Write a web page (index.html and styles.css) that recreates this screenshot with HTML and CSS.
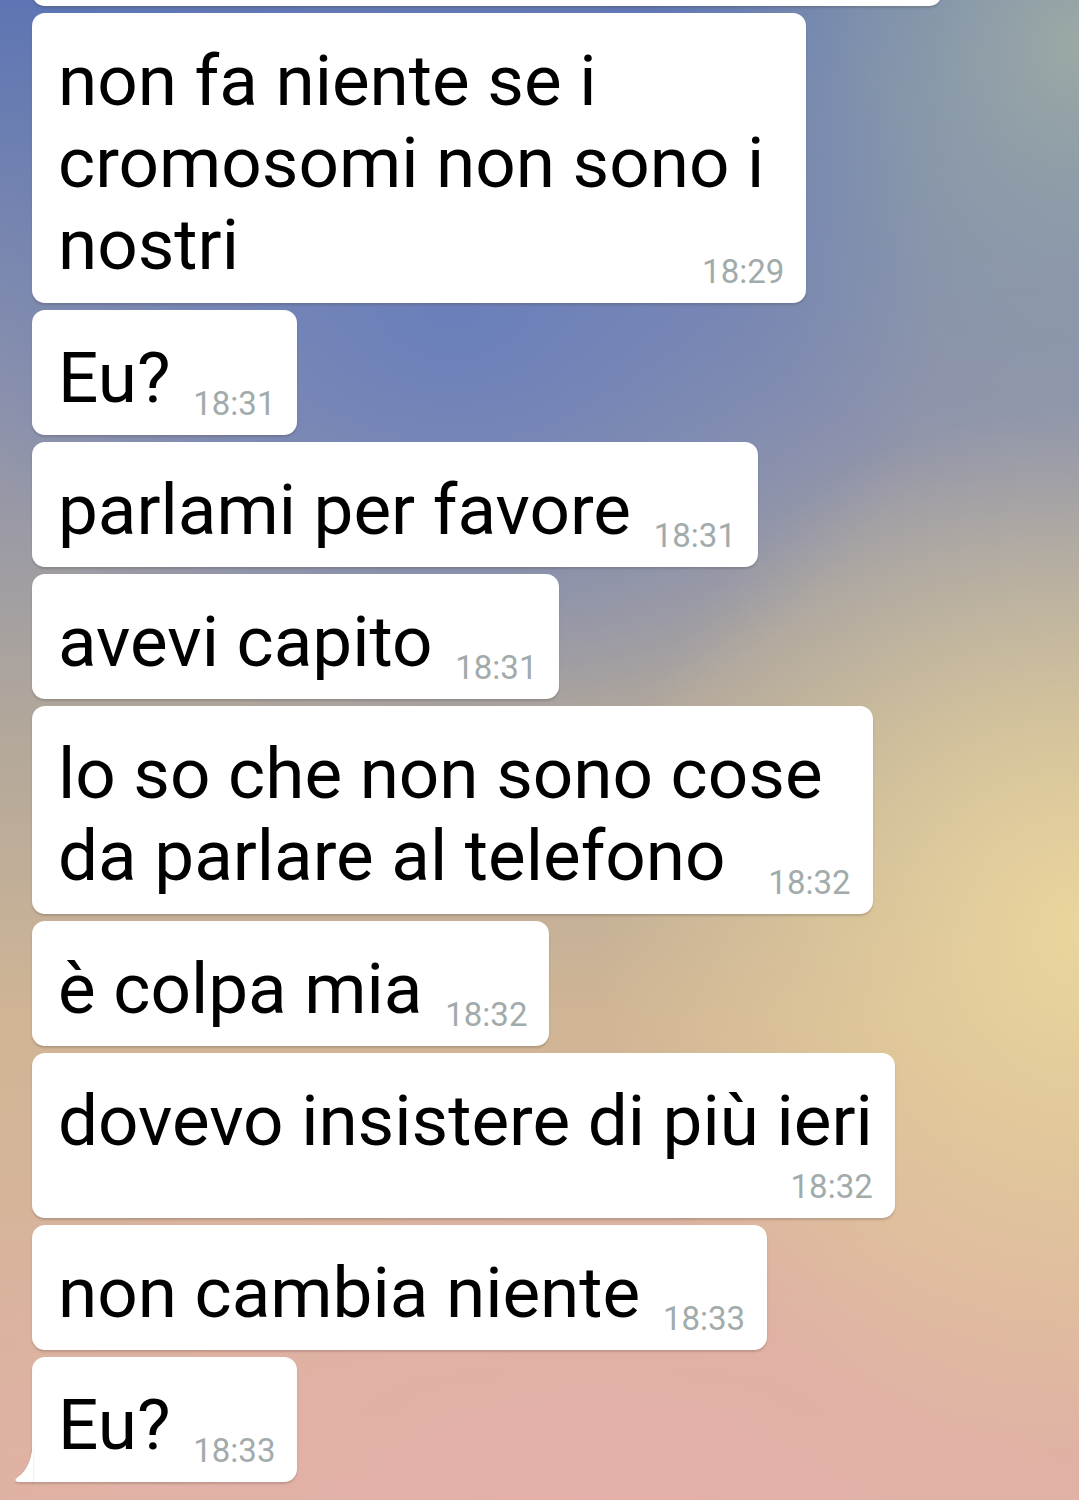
FILE: index.html
```html
<!DOCTYPE html>
<html lang="it">

<head>
  <meta charset="UTF-8">
  <title>Chat</title>
  <link rel="stylesheet" href="styles.css">
</head>

<body>
  <div class="chat">

    <!-- previous message, only its bottom edge is on screen -->
    <div class="msg msg-cut"></div>

    <div class="msg msg-multi"><span class="text">non fa niente se i<br>cromosomi non sono i<br>nostri</span><span class="spacer"></span><span class="time">18:29</span></div>

    <div class="msg"><span class="text">Eu?</span><span class="spacer"></span><span class="time">18:31</span></div>

    <div class="msg"><span class="text">parlami per favore</span><span class="spacer"></span><span class="time">18:31</span></div>

    <div class="msg"><span class="text">avevi capito</span><span class="spacer"></span><span class="time">18:31</span></div>

    <div class="msg msg-multi"><span class="text">lo so che non sono cose<br>da parlare al telefono</span><span class="spacer"></span><span class="time">18:32</span></div>

    <div class="msg"><span class="text">è colpa mia</span><span class="spacer"></span><span class="time">18:32</span></div>

    <div class="msg"><span class="text">dovevo insistere di più ieri</span><br><span class="spacer"></span><span class="time">18:32</span></div>

    <div class="msg"><span class="text">non cambia niente</span><span class="spacer"></span><span class="time">18:33</span></div>

    <div class="msg msg-last"><span class="text">Eu?</span><span class="spacer"></span><span class="time">18:33</span>
      <svg class="tail" width="18" height="44" viewBox="0 0 18 44">
        <path d="M18 0 C18 20 12 33 3 39 Q-1 42 1 43 Q2 44 4 44 L18 44 Z" fill="#fff" />
      </svg>
    </div>

  </div>
</body>

</html>
```

FILE: styles.css
```css
* {
  box-sizing: border-box;
}

body {
  margin: 0;
  font-family: Roboto, "Noto Sans", Arial, sans-serif;
}

.chat {
  height: 1500px;
  overflow: hidden;
  display: flex;
  flex-direction: column;
  justify-content: flex-end;
  align-items: flex-start;
  gap: 7px;
  padding: 0 0 18px 32px;
  background:
    radial-gradient(ellipse 45% 30% at 42% 20%, #6a7fbb 0%, rgba(106, 127, 187, 0) 100%),
    radial-gradient(ellipse 40% 30% at 100% 3%, #9ca9a5 0%, rgba(156, 169, 165, 0) 100%),
    radial-gradient(ellipse 45% 35% at 100% 62%, #ead59d 0%, rgba(234, 213, 157, 0) 100%),
    radial-gradient(ellipse 70% 30% at 55% 100%, #e4b0a9 0%, rgba(228, 176, 169, 0) 100%),
    linear-gradient(180deg, #5d75b4 0%, #8e93ab 28%, #b1a79b 48%, #d0b595 68%, #dfb2a2 100%);
}

.msg {
  position: relative;
  flex-shrink: 0;
  background: #fff;
  border-radius: 13px;
  padding: 27px 22px 16px 26px;
  font-size: 33px;
  line-height: 1;
  box-shadow: 0 2px 2px rgba(70, 60, 50, 0.22);
}

.msg-cut {
  width: 910px;
  height: 160px;
}

.msg-multi {
  padding-right: 42px;
  padding-bottom: 17px;
}

.text {
  font-size: 71px;
  line-height: 82px;
  color: #000;
}

.spacer {
  display: inline-block;
  width: 105px;
  height: 35px;
}

.time {
  position: absolute;
  right: 22px;
  bottom: 15px;
  font-size: 33px;
  line-height: 1;
  color: #a2abab;
}

.msg-last {
  border-bottom-left-radius: 0;
}

.tail {
  position: absolute;
  left: -17px;
  bottom: 0;
  filter: drop-shadow(0 2px 1px rgba(70, 60, 50, 0.2));
}
```
